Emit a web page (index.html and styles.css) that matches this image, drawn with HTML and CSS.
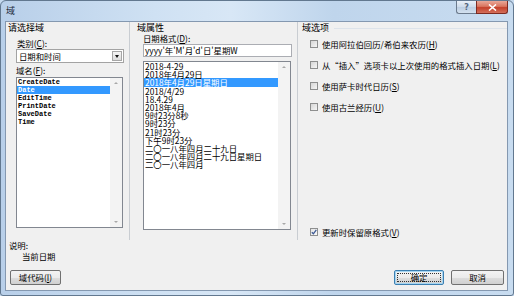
FILE: index.html
```html
<!DOCTYPE html>
<html lang="zh-CN">
<head>
<meta charset="utf-8">
<title>域</title>
<link rel="stylesheet" href="styles.css">
</head>
<body>
<div class="window">
  <div class="titlebar">
    <span class="title">域</span>
    <div class="caption-btns">
      <span class="cap-btn help">?</span>
      <span class="cap-btn close"><svg width="9" height="7" viewBox="0 0 9 7"><path d="M1 0.5 L8 6.5 M8 0.5 L1 6.5" stroke="#fff" stroke-width="1.6" fill="none"/></svg></span>
    </div>
  </div>
  <div class="client">
    <div class="panels">
      <section class="panel p-left">
        <div class="heading">请选择域</div>
        <div class="label lbl-cat">类别(<u>C</u>):</div>
        <div class="combo"><span class="combo-text">日期和时间</span><span class="combo-btn"><i class="tri-down"></i></span></div>
        <div class="label lbl-name">域名(<u>F</u>):</div>
        <div class="listbox lb-fields">
          <ul class="items mono">
            <li>CreateDate</li>
            <li class="sel">Date</li>
            <li>EditTime</li>
            <li>PrintDate</li>
            <li>SaveDate</li>
            <li>Time</li>
          </ul>
          <div class="vscroll"><i class="sa up"></i><i class="sa down"></i></div>
        </div>
      </section>
      <section class="panel p-mid">
        <div class="heading">域属性</div>
        <div class="label lbl-fmt">日期格式(<u>D</u>):</div>
        <div class="textbox">yyyy'年'M'月'd'日'星期W</div>
        <div class="listbox lb-formats">
          <ul class="items cjk">
            <li>2018-4-29</li>
            <li>2018年4月29日</li>
            <li class="sel">2018年4月29日星期日</li>
            <li>2018/4/29</li>
            <li>18.4.29</li>
            <li>2018年4月</li>
            <li>9时23分8秒</li>
            <li>9时23分</li>
            <li>21时23分</li>
            <li>下午9时23分</li>
            <li>二〇一八年四月二十九日</li>
            <li>二〇一八年四月二十九日星期日</li>
            <li>二〇一八年四月</li>
          </ul>
          <div class="vscroll"><i class="sa up"></i><i class="sa down"></i></div>
        </div>
      </section>
      <section class="panel p-right">
        <div class="heading heading-line"><span>域选项</span><span class="hline"></span></div>
        <div class="opt"><span class="cb"></span><span>使用阿拉伯回历/希伯来农历(<u>H</u>)</span></div>
        <div class="opt"><span class="cb"></span><span>从“插入”选项卡以上次使用的格式插入日期(<u>L</u>)</span></div>
        <div class="opt"><span class="cb"></span><span>使用萨卡时代日历(<u>S</u>)</span></div>
        <div class="opt"><span class="cb"></span><span>使用古兰经历(<u>U</u>)</span></div>
        <div class="opt opt-last"><span class="cb checked"><svg width="6" height="6" viewBox="0 0 6 6"><path d="M0.8 3.2 L2.4 4.8 L5.3 0.9" stroke="#3d5a96" stroke-width="1.3" fill="none"/></svg></span><span>更新时保留原格式(<u>V</u>)</span></div>
      </section>
    </div>
    <div class="desc">
      <div>说明:</div>
      <div class="desc-text">当前日期</div>
    </div>
    <div class="footer">
      <button class="btn btn-code">域代码(<u>I</u>)</button>
      <span class="spacer"></span>
      <button class="btn btn-ok"><span class="focus">确定</span></button>
      <button class="btn btn-cancel">取消</button>
    </div>
  </div>
</div>
</body>
</html>
```
FILE: styles.css
```css
* { box-sizing: border-box; margin: 0; padding: 0; }
html, body { width: 514px; height: 296px; overflow: hidden; }
body {
  background: #c5d9ee;
  font-family: "Noto Sans CJK SC", "Noto Sans", sans-serif;
  font-size: 8.4px;
  color: #000;
}
u { text-decoration: underline; text-underline-offset: 1px; }

.window {
  width: 514px;
  height: 296px;
  border: 1px solid #62788f;
  border-radius: 6px 6px 3px 3px;
  background: linear-gradient(to right, #b8cfe9 0%, #cfe1f3 30%, #d8e7f6 45%, #bfd5ec 65%, #c8dcf0 100%);
  padding: 0 5px 4px 4px;
  display: flex;
  flex-direction: column;
}

.titlebar {
  height: 20px;
  display: flex;
  justify-content: space-between;
  align-items: flex-start;
}
.title {
  padding: 5px 0 0 1px;
  font-size: 9px;
  line-height: 10px;
  color: #1e2a38;
}
.caption-btns { display: flex; }
.cap-btn {
  height: 13px;
  display: flex;
  align-items: center;
  justify-content: center;
  border: 1px solid #6b7a8d;
  border-top: none;
}
.help {
  width: 20px;
  border-right: none;
  border-radius: 0 0 0 3px;
  background: linear-gradient(#e9f0f8, #cddbea 50%, #bccee2 51%, #d3e1ef);
  color: #55677d;
  font-family: "DejaVu Sans", sans-serif;
  font-size: 8px;
  font-weight: bold;
}
.close {
  width: 32px;
  border-color: #7d2b22;
  border-radius: 0 0 3px 0;
  background: linear-gradient(#e9a898, #d9755f 45%, #c4412b 55%, #d3705c);
}

.client {
  flex: 1;
  border: 1px solid #8498b0;
  background: #f0f0f0;
  display: flex;
  flex-direction: column;
}

.panels {
  height: 218px;
  display: grid;
  grid-template-columns: 124px 168px 1fr;
}
.panel {
  display: flex;
  flex-direction: column;
  padding-top: 1px;
}
.p-left, .p-mid {
  border-right: 1px solid #c9cdd2;
}
.heading {
  font-size: 9px;
  line-height: 10px;
}
.p-left .heading { padding-left: 2px; }
.p-mid .heading { padding-left: 7px; }
.p-right .heading { padding-left: 4px; }
.heading-line { display: flex; align-items: center; }
.hline {
  flex: 1;
  margin-left: 5px;
  border-top: 1px solid #dde3ea;
}

.label { line-height: 12px; }
.lbl-cat { margin-top: 4px; padding-left: 11px; }
.lbl-name { margin-top: 1px; padding-left: 10px; }
.lbl-fmt { line-height: 11px; padding-left: 13px; }

.combo {
  margin-left: 10px;
  width: 108px;
  height: 14px;
  border: 1px solid #a3a3a3;
  background: #fff;
  display: flex;
  align-items: center;
  justify-content: space-between;
  padding: 0 1px 0 2px;
}
.combo-text { line-height: 12px; }
.combo-btn {
  width: 10px;
  height: 10px;
  border: 1px solid #a6a6a6;
  background: linear-gradient(#f4f4f4, #dcdcdc);
  display: flex;
  align-items: center;
  justify-content: center;
}
.tri-down {
  width: 0;
  height: 0;
  border-left: 2.5px solid transparent;
  border-right: 2.5px solid transparent;
  border-top: 3px solid #111;
}

.textbox {
  margin-left: 13px;
  width: 149px;
  height: 13px;
  border: 1px solid #abadb3;
  background: #fff;
  line-height: 11px;
  padding-left: 1px;
}

.listbox {
  border: 1px solid #828790;
  background: #fff;
  display: flex;
}
.lb-fields {
  margin: 1px 0 0 10px;
  width: 107px;
  height: 151px;
}
.lb-formats {
  margin: 4px 0 0 13px;
  width: 148px;
  height: 169px;
}
.items { flex: 1; list-style: none; }
.items li { padding-left: 1px; white-space: nowrap; }
.items li.sel { background: #3399ff; color: #fff; }
.mono li {
  font-family: "Liberation Mono", monospace;
  font-size: 7px;
  font-weight: bold;
  line-height: 8px;
}
.cjk li {
  font-size: 8.4px;
  line-height: 8.2px;
}
.vscroll {
  width: 12px;
  background: #f3f3f3;
  display: flex;
  flex-direction: column;
  justify-content: space-between;
  align-items: center;
  padding: 4px 0;
}
.sa {
  width: 0;
  height: 0;
  border-left: 2.5px solid transparent;
  border-right: 2.5px solid transparent;
}
.sa.up { border-bottom: 2.5px solid #a8a8a8; }
.sa.down { border-top: 2.5px solid #a8a8a8; }

.opt {
  height: 21px;
  display: flex;
  align-items: center;
  gap: 4px;
  padding-left: 12px;
}
.opt:nth-child(2) { margin-top: 0; }
.opt-last {
  height: 12px;
  margin-top: auto;
  margin-bottom: 2px;
}
.cb {
  width: 8px;
  height: 8px;
  border: 1px solid #8e8f8f;
  background: linear-gradient(135deg, #d6d6d6, #f6f6f6);
  display: flex;
  align-items: center;
  justify-content: center;
}
.cb.checked { background: linear-gradient(135deg, #e4e4e4, #fafafa); }

.desc {
  padding-left: 3px;
  line-height: 11px;
}
.desc-text { padding-left: 13px; }

.footer {
  margin-top: 8px;
  display: flex;
  gap: 7px;
  padding: 0 3px 0 4px;
}
.spacer { flex: 1; }
.btn {
  height: 15px;
  border: 1px solid #707070;
  border-radius: 2px;
  background: linear-gradient(#f3f3f3 0%, #ebebeb 50%, #dddddd 51%, #d0d0d0 100%);
  font-family: inherit;
  font-size: 8.4px;
  color: #000;
  display: flex;
  align-items: center;
  justify-content: center;
  line-height: 11px;
}
.btn-code { width: 51px; }
.btn-ok {
  width: 50px;
  border-color: #3c7fb1;
  box-shadow: inset 0 0 0 1px #a6d6f2;
  padding: 2px;
}
.btn-ok .focus {
  width: 100%;
  height: 100%;
  border: 1px dotted #333;
  display: flex;
  align-items: center;
  justify-content: center;
}
.btn-cancel { width: 53px; }
```
